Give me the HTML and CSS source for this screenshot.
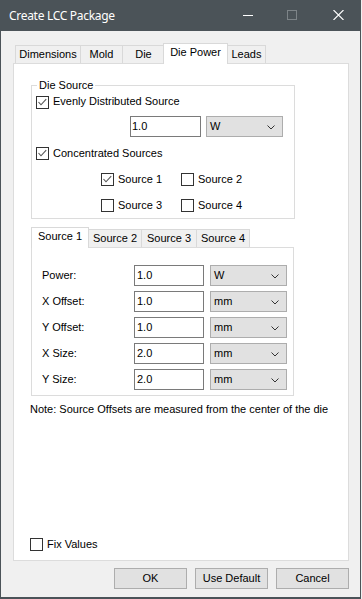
FILE: index.html
```html
<!DOCTYPE html>
<html>
<head>
<meta charset="utf-8">
<title>Create LCC Package</title>
<link rel="stylesheet" href="styles.css">
</head>
<body>
<div class="window">
  <div class="titlebar">
    <span class="title">Create LCC Package</span>
    <div class="caption-buttons">
      <svg class="cap-icon cap-min" width="10" height="10" viewBox="0 0 10 10"><line x1="0" y1="5.5" x2="10" y2="5.5" stroke="#ffffff" stroke-width="1"/></svg>
      <svg class="cap-icon cap-max" width="10" height="10" viewBox="0 0 10 10"><rect x="0.5" y="0.5" width="9" height="9" fill="none" stroke="#7d8488" stroke-width="1"/></svg>
      <svg class="cap-icon cap-close" width="11" height="10" viewBox="0 0 11 10"><path d="M0.5 0 L10.5 10 M10.5 0 L0.5 10" stroke="#ffffff" stroke-width="1.1" fill="none"/></svg>
    </div>
  </div>
  <div class="content">
    <div class="tabstrip main-tabs">
      <div class="tab t-dimensions">Dimensions</div>
      <div class="tab t-mold">Mold</div>
      <div class="tab t-die">Die</div>
      <div class="tab selected t-diepower">Die Power</div>
      <div class="tab t-leads">Leads</div>
    </div>
    <div class="tabpanel main-panel">
      <fieldset class="group">
        <legend>Die Source</legend>
        <div class="check check-evenly">
          <span class="box"><svg width="11" height="11" viewBox="0 0 11 11"><polyline points="1.5,5 4,7.8 9.2,2.2" fill="none" stroke="#555555" stroke-width="1.1"/></svg></span>
          <span class="lbl">Evenly Distributed Source</span>
        </div>
        <div class="field-row group-field">
          <div class="textbox tb-group">1.0</div>
          <div class="combo cb-group"><span>W</span><svg width="8" height="5" viewBox="0 0 8 5"><polyline points="0.5,0.5 4,4 7.5,0.5" fill="none" stroke="#333333" stroke-width="1"/></svg></div>
        </div>
        <div class="check check-conc">
          <span class="box"><svg width="11" height="11" viewBox="0 0 11 11"><polyline points="1.5,5 4,7.8 9.2,2.2" fill="none" stroke="#555555" stroke-width="1.1"/></svg></span>
          <span class="lbl">Concentrated Sources</span>
        </div>
        <div class="source-grid">
          <div class="check">
            <span class="box"><svg width="11" height="11" viewBox="0 0 11 11"><polyline points="1.5,5 4,7.8 9.2,2.2" fill="none" stroke="#555555" stroke-width="1.1"/></svg></span>
            <span class="lbl">Source 1</span>
          </div>
          <div class="check"><span class="box"></span><span class="lbl">Source 2</span></div>
          <div class="check"><span class="box"></span><span class="lbl">Source 3</span></div>
          <div class="check"><span class="box"></span><span class="lbl">Source 4</span></div>
        </div>
      </fieldset>

      <div class="tabstrip sub-tabs">
        <div class="tab selected s1">Source 1</div>
        <div class="tab s2">Source 2</div>
        <div class="tab s3">Source 3</div>
        <div class="tab s4">Source 4</div>
      </div>
      <div class="tabpanel sub-panel">
        <div class="prop-row">
          <span class="prop-label">Power:</span>
          <div class="textbox tb-prop">1.0</div>
          <div class="combo cb-prop"><span>W</span><svg width="8" height="5" viewBox="0 0 8 5"><polyline points="0.5,0.5 4,4 7.5,0.5" fill="none" stroke="#333333" stroke-width="1"/></svg></div>
        </div>
        <div class="prop-row">
          <span class="prop-label">X Offset:</span>
          <div class="textbox tb-prop">1.0</div>
          <div class="combo cb-prop"><span>mm</span><svg width="8" height="5" viewBox="0 0 8 5"><polyline points="0.5,0.5 4,4 7.5,0.5" fill="none" stroke="#333333" stroke-width="1"/></svg></div>
        </div>
        <div class="prop-row">
          <span class="prop-label">Y Offset:</span>
          <div class="textbox tb-prop">1.0</div>
          <div class="combo cb-prop"><span>mm</span><svg width="8" height="5" viewBox="0 0 8 5"><polyline points="0.5,0.5 4,4 7.5,0.5" fill="none" stroke="#333333" stroke-width="1"/></svg></div>
        </div>
        <div class="prop-row">
          <span class="prop-label">X Size:</span>
          <div class="textbox tb-prop">2.0</div>
          <div class="combo cb-prop"><span>mm</span><svg width="8" height="5" viewBox="0 0 8 5"><polyline points="0.5,0.5 4,4 7.5,0.5" fill="none" stroke="#333333" stroke-width="1"/></svg></div>
        </div>
        <div class="prop-row">
          <span class="prop-label">Y Size:</span>
          <div class="textbox tb-prop">2.0</div>
          <div class="combo cb-prop"><span>mm</span><svg width="8" height="5" viewBox="0 0 8 5"><polyline points="0.5,0.5 4,4 7.5,0.5" fill="none" stroke="#333333" stroke-width="1"/></svg></div>
        </div>
      </div>

      <p class="note">Note: Source Offsets are measured from the center of the die</p>

      <div class="check check-fix"><span class="box"></span><span class="lbl">Fix Values</span></div>
    </div>
    <div class="buttons">
      <div class="btn">OK</div>
      <div class="btn">Use Default</div>
      <div class="btn">Cancel</div>
    </div>
  </div>
</div>
</body>
</html>
```

FILE: styles.css
```css
html, body {
  margin: 0;
  padding: 0;
}
body {
  background: #f0f0f0;
  font-family: "Liberation Sans", Arial, sans-serif;
  font-size: 11px;
  color: #000000;
}
.window {
  width: 361px;
  height: 599px;
  box-sizing: border-box;
  border: 1px solid #4b5358;
  border-top: none;
  border-bottom-width: 2px;
  background: #f0f0f0;
  display: flex;
  flex-direction: column;
}
.titlebar {
  height: 31px;
  flex: none;
  background: #4b5358;
  display: flex;
  align-items: flex-start;
  padding-left: 8px;
  padding-right: 16px;
}
.title {
  font-family: "Noto Sans", "Open Sans", sans-serif;
  font-size: 12px;
  letter-spacing: -0.3px;
  line-height: 31px;
  color: #ffffff;
}
.caption-buttons {
  margin-left: auto;
  display: flex;
  align-items: flex-start;
  margin-top: 10px;
}
.cap-icon { display: block; }
.cap-max { margin-left: 34px; }
.cap-close { margin-left: 36px; }

.content {
  flex: 1;
  padding: 12px 11px 0 12px;
  display: flex;
  flex-direction: column;
}

/* tabs */
.tabstrip {
  display: flex;
  align-items: flex-end;
  height: 20px;
  flex: none;
}
.main-tabs { padding-left: 2px; }
.tab {
  box-sizing: border-box;
  height: 18px;
  border: 1px solid #d9d9d9;
  border-bottom: none;
  background: #f0f0f0;
  margin-right: -1px;
  text-align: center;
  line-height: 17px;
  white-space: nowrap;
}
.tab.selected {
  height: 21px;
  margin-bottom: -1px;
  background: #ffffff;
  position: relative;
  z-index: 1;
}
.t-dimensions { width: 66px; }
.t-mold { width: 43px; }
.t-die { width: 43px; }
.t-diepower { width: 65px; margin-left: -1px; }
.t-leads { width: 39px; }

.tabpanel {
  box-sizing: border-box;
  border: 1px solid #dcdcdc;
  background: #ffffff;
}
.main-panel {
  height: 498px;
  flex: none;
  display: flex;
  flex-direction: column;
}

/* group box */
.group {
  margin: 15px 0 0 17px;
  width: 264px;
  box-sizing: border-box;
  padding: 0 0 6px 0;
  border: 1px solid #dcdcdc;
  min-width: 0;
}
.group legend {
  margin-left: 5px;
  padding: 0 2px;
  line-height: 13px;
}

/* checkboxes */
.check {
  display: flex;
  align-items: flex-start;
  height: 13px;
}
.box {
  box-sizing: border-box;
  width: 13px;
  height: 13px;
  flex: none;
  border: 1px solid #333333;
  background: #ffffff;
  display: flex;
}
.box svg { display: block; }
.lbl {
  margin-left: 4px;
  line-height: 13px;
  white-space: nowrap;
}
.check-evenly { margin: 4px 0 0 4px; }
.check-evenly .lbl { margin-top: -1px; }
.check-conc { margin: 10px 0 0 4px; }
.source-grid {
  margin: 13px 0 0 69px;
  display: grid;
  grid-template-columns: 80px 80px;
  row-gap: 13px;
}
.check-fix {
  margin: auto 0 9px 16px;
}

/* fields */
.field-row {
  display: flex;
  height: 21px;
}
.group-field { margin: 7px 0 0 98px; }
.textbox {
  box-sizing: border-box;
  height: 21px;
  border: 1px solid #7a7a7a;
  background: #ffffff;
  padding-left: 1px;
  line-height: 19px;
}
.combo {
  box-sizing: border-box;
  height: 21px;
  border: 1px solid #adadad;
  background: #e1e1e1;
  display: flex;
  align-items: center;
  justify-content: space-between;
  padding: 0 7px 0 3px;
  line-height: 19px;
}
.combo svg { display: block; margin-top: 1px; }
.tb-group { width: 71px; }
.cb-group { width: 77px; margin-left: 5px; }

/* sub tabs */
.sub-tabs { margin: 8px 0 0 17px; }
.s1 { width: 58px; }
.s2 { width: 54px; }
.s3 { width: 56px; }
.s4 { width: 54px; }
.sub-panel {
  margin-left: 17px;
  width: 263px;
  height: 149px;
  flex: none;
  padding: 17px 0 0 10px;
  display: flex;
  flex-direction: column;
  gap: 5px;
}
.prop-row {
  display: flex;
  align-items: center;
  height: 21px;
}
.prop-label {
  width: 92px;
  flex: none;
  line-height: 21px;
}
.tb-prop { width: 70px; padding-left: 2px; }
.cb-prop { width: 77px; margin-left: 6px; }

.note {
  margin: 7px 0 0 16px;
  line-height: 13px;
  white-space: nowrap;
}

/* buttons */
.buttons {
  margin-top: 7px;
  display: flex;
  justify-content: flex-end;
  gap: 8px;
}
.btn {
  box-sizing: border-box;
  width: 73px;
  height: 21px;
  border: 1px solid #adadad;
  background: #e1e1e1;
  text-align: center;
  line-height: 19px;
}
```
